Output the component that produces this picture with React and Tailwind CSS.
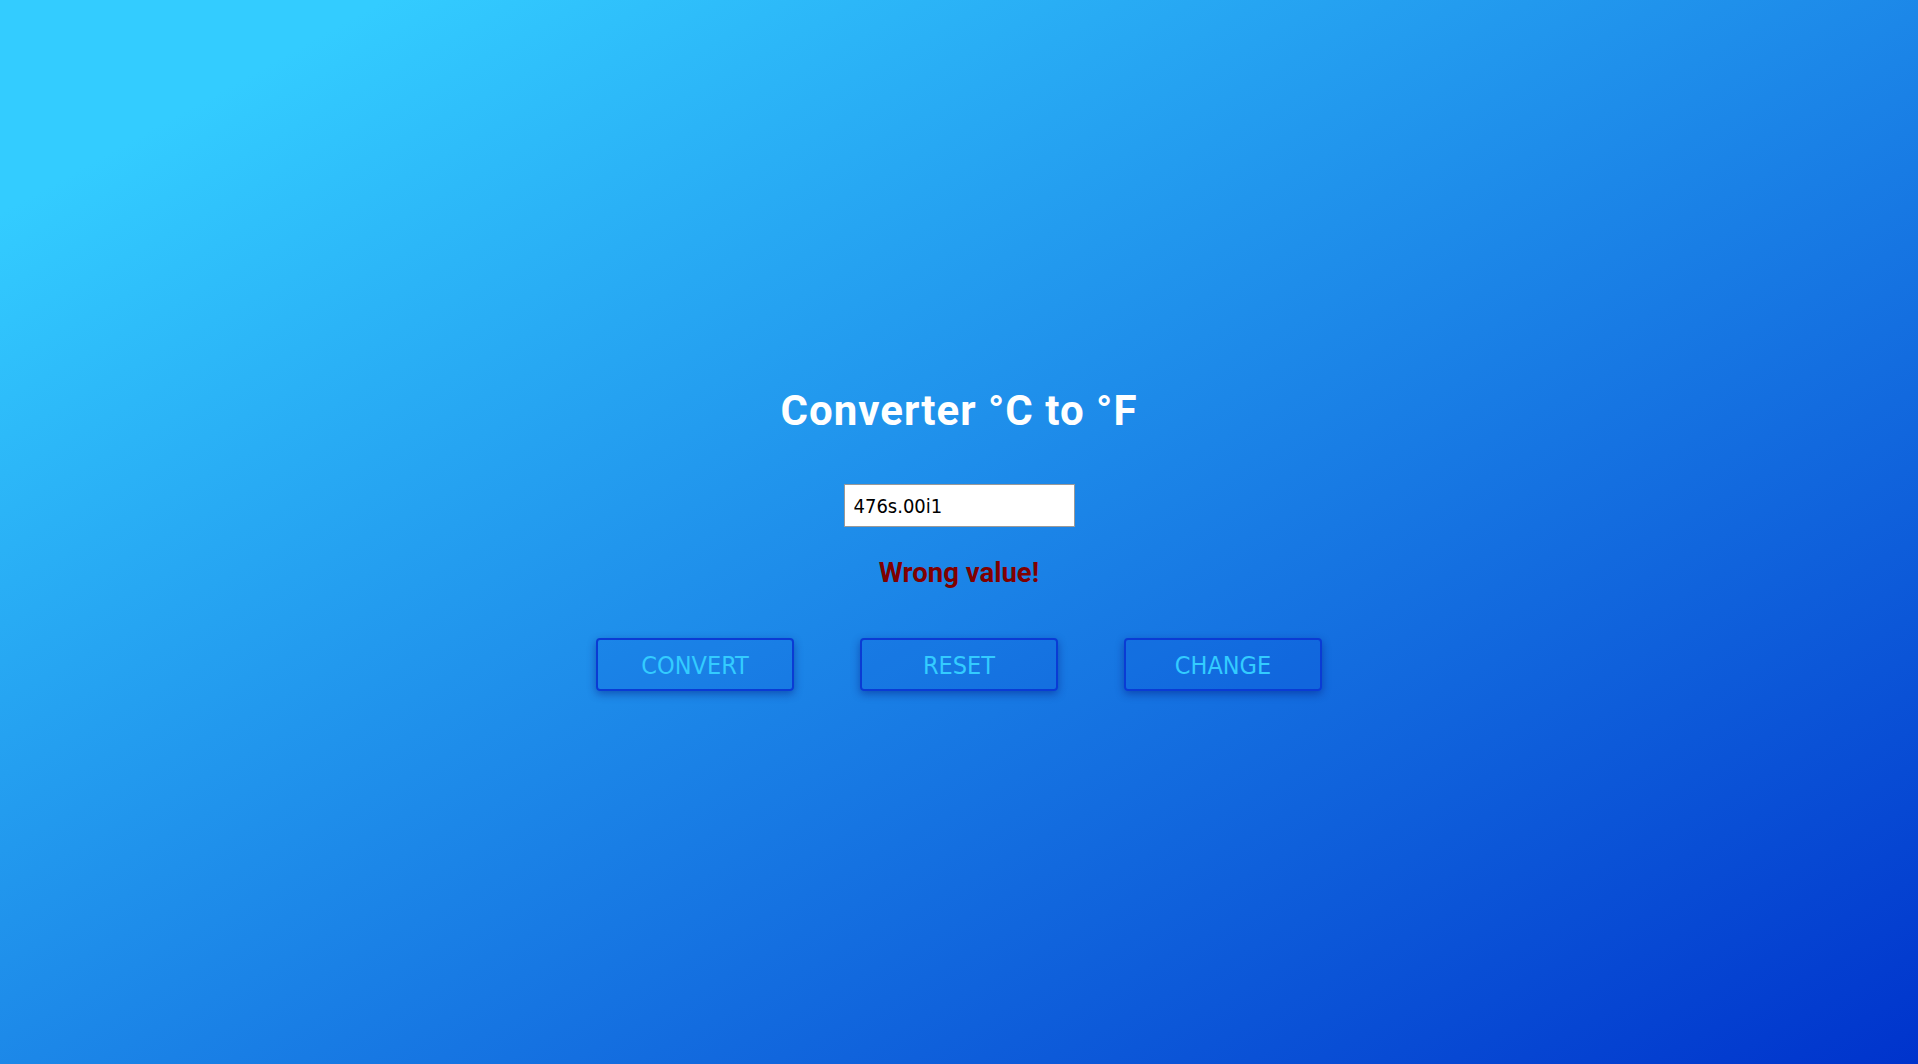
import React, { useState } from 'react';

export default function App() {
  const [value, setValue] = useState('476s.00i1');
  const [error, setError] = useState('Wrong value!');

  const btnClass =
    "w-[198px] h-[53px] pt-[4px] rounded-[4px] border-2 border-[#0a3bd4] bg-[#0033cc]/10 shadow-[0_3px_8px_rgba(0,20,120,0.45)] text-[#33ccff] text-[25px] font-['DejaVu_Sans_Condensed','DejaVu_Sans',sans-serif] uppercase";

  return (
    <div className="h-screen w-full bg-linear-to-br/srgb from-[#33ccff] from-10% to-[#0033cc] flex flex-col items-center justify-center pt-3">
      <h1 className="text-[42px] leading-[50px] font-bold tracking-[1px] text-white font-['Roboto',sans-serif]">
        Converter °C to °F
      </h1>

      {/* Input */}
      <input
        type="text"
        value={value}
        onChange={(e) => setValue(e.target.value)}
        className="mt-[48px] w-[231px] h-[43px] bg-white border border-[#999999] px-[9px] pt-[2px] text-[20px] text-black outline-none font-['DejaVu_Sans_Condensed','DejaVu_Sans',sans-serif]"
      />

      <p className="mt-[30px] text-[27.5px] leading-[32px] font-bold text-[#800000] font-['Roboto',sans-serif]">
        {error}
      </p>

      {/* Buttons */}
      <div className="mt-[49px] flex gap-[66px]">
        <button className={btnClass} onClick={() => setError('')}>Convert</button>
        <button className={btnClass} onClick={() => { setValue(''); setError(''); }}>Reset</button>
        <button className={btnClass}>Change</button>
      </div>
    </div>
  );
}
